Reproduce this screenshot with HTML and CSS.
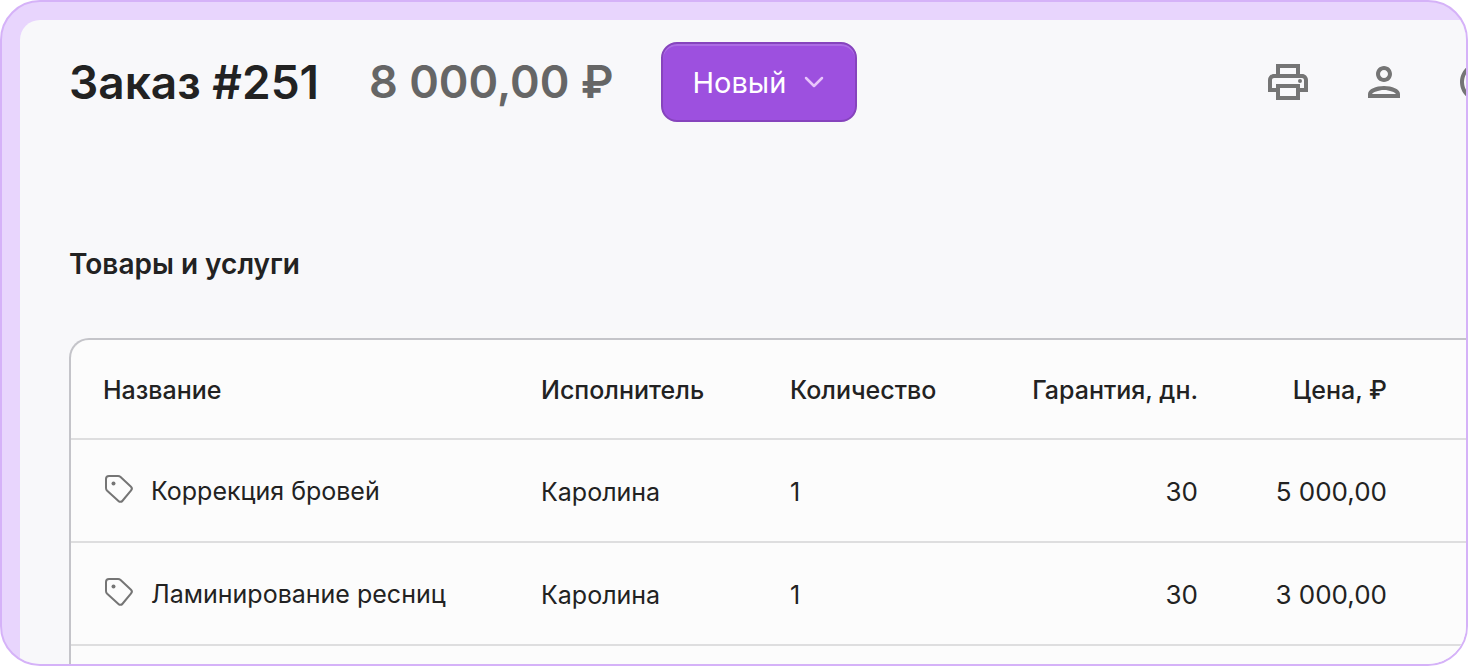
FILE: index.html
```html
<!DOCTYPE html>
<html lang="ru">
<head>
<meta charset="utf-8">
<meta name="viewport" content="width=device-width, initial-scale=1">
<title>Заказ #251</title>
<link rel="stylesheet" href="styles.css">
</head>
<body>
<div class="frame">
  <main class="page">
    <header class="order-header">
      <h1 class="order-title">Заказ #251</h1>
      <span class="order-total">8 000,00 ₽</span>
      <button class="status" type="button">
        Новый
        <svg class="status-arrow" viewBox="0 0 20 12" aria-hidden="true"><path d="M2 2l8 8 8-8"/></svg>
      </button>
      <div class="actions">
        <button class="action" type="button" aria-label="Печать">
          <svg viewBox="0 0 24 24"><path d="M19 8h-1V3H6v5H5c-1.66 0-3 1.34-3 3v6h4v4h12v-4h4v-6c0-1.66-1.34-3-3-3zM8 5h8v3H8V5zm8 12v2H8v-4h8v2zm2-2v-2H6v2H4v-4c0-.55.45-1 1-1h14c.55 0 1 .45 1 1v4h-2z"/><circle cx="18" cy="11.5" r="1"/></svg>
        </button>
        <button class="action" type="button" aria-label="Клиент">
          <svg viewBox="0 0 24 24"><path d="M12 6c1.1 0 2 .9 2 2s-.9 2-2 2-2-.9-2-2 .9-2 2-2m0 10c2.7 0 5.8 1.29 6 2H6c.23-.72 3.31-2 6-2m0-12C9.79 4 8 5.79 8 8s1.79 4 4 4 4-1.79 4-4-1.79-4-4-4zm0 10c-4 0-8 1.6-8 4v2h16v-2c0-2.400-4-4-8-4z"/></svg>
        </button>
        <button class="action" type="button" aria-label="История">
          <svg viewBox="0 0 24 24"><path d="M12 2C6.48 2 2 6.48 2 12s4.48 10 10 10 10-4.48 10-10S17.52 2 12 2zm0 18c-4.41 0-8-3.59-8-8s3.59-8 8-8 8 3.59 8 8-3.59 8-8 8z"/></svg>
        </button>
      </div>
    </header>

    <h2 class="section-title">Товары и услуги</h2>

    <div class="table-box">
      <table class="items">
        <colgroup>
          <col class="col-name"><col class="col-person"><col class="col-count"><col class="col-warranty"><col class="col-price"><col>
        </colgroup>
        <thead>
          <tr><th>Название</th><th>Исполнитель</th><th>Количество</th><th class="num">Гарантия, дн.</th><th class="num">Цена, ₽</th><td></td></tr>
        </thead>
        <tbody>
          <tr>
            <td><div class="item"><svg class="tag" viewBox="0 0 28 28" aria-hidden="true"><path d="M4 1h9a4 4 0 0 1 2.600 1L26 11.800a2.500 2.500 0 0 1 .1 3.500L17.300 26a2.500 2.500 0 0 1-3.600.2L2.200 15.800A4 4 0 0 1 1 13V4a3 3 0 0 1 3-3z"/><circle cx="8.500" cy="8.500" r="2"/></svg>Коррекция бровей</div></td>
            <td>Каролина</td><td>1</td><td class="num">30</td><td class="num">5 000,00</td><td></td>
          </tr>
          <tr>
            <td><div class="item"><svg class="tag" viewBox="0 0 28 28" aria-hidden="true"><path d="M4 1h9a4 4 0 0 1 2.600 1L26 11.800a2.500 2.500 0 0 1 .1 3.500L17.300 26a2.500 2.500 0 0 1-3.600.2L2.200 15.800A4 4 0 0 1 1 13V4a3 3 0 0 1 3-3z"/><circle cx="8.500" cy="8.500" r="2"/></svg>Ламинирование ресниц</div></td>
            <td>Каролина</td><td>1</td><td class="num">30</td><td class="num">3 000,00</td><td></td>
          </tr>
        </tbody>
      </table>
    </div>
  </main>
</div>
</body>
</html>
```
FILE: styles.css
```css
* {
  box-sizing: border-box;
}

body {
  margin: 0;
  background: #fff;
  color: #222;
  font-family: Inter, "Liberation Sans", sans-serif;
}

.frame {
  display: flex;
  height: 100vh;
  padding: 18px 0 0 18px;
  overflow: hidden;
  border: 2px solid #d5b2f8;
  border-radius: 40px;
  background: #e8d5fd;
}

.page {
  display: flex;
  flex: 1;
  flex-direction: column;
  min-width: 0;
  padding: 22px 0 0 49px;
  overflow: hidden;
  border-top-left-radius: 20px;
  background: #f8f8fa;
}

.order-header {
  display: flex;
  align-items: center;
  overflow: hidden;
}

.order-title,
.order-total {
  margin: 0;
  font-size: 46px;
  font-weight: 600;
  line-height: 60px;
  white-space: nowrap;
}

.order-total {
  margin-left: 50px;
  color: #666;
  font-size: 45px;
}

.status {
  display: flex;
  align-items: center;
  gap: 18px;
  height: 80px;
  margin-left: 47px;
  padding: 0 31px 0 30px;
  border: 2px solid #8644bd;
  border-radius: 16px;
  background: #9d50df;
  box-shadow: inset 0 2px 0 #ac6ce4;
  color: #fff;
  font-family: inherit;
  font-size: 29px;
  white-space: nowrap;
}

.status-arrow {
  width: 20px;
  height: 12px;
  fill: none;
  stroke: #e8c4fb;
  stroke-width: 2.5;
  stroke-linecap: round;
  stroke-linejoin: round;
}

.actions {
  display: flex;
  flex-shrink: 0;
  gap: 48px;
  margin-left: auto;
  margin-right: -38px;
}

.action {
  width: 48px;
  height: 48px;
  padding: 0;
  border: 0;
  background: none;
}

.action svg {
  display: block;
  fill: #757575;
}

.section-title {
  margin: 122px 0 54px;
  font-size: 28px;
  font-weight: 600;
  line-height: 40px;
}

.table-box {
  flex: 1;
  overflow: hidden;
  border: 2px solid #c4c4c9;
  border-width: 2px 0 0 2px;
  border-top-left-radius: 20px;
  background: #fcfcfc;
}

.items {
  width: 100%;
  border-collapse: separate;
  border-spacing: 0;
  table-layout: fixed;
  font-size: 25px;
  line-height: 32px;
}

.col-name {
  width: 438px;
}

.col-person {
  width: 249px;
}

.col-count {
  width: 222px;
}

.col-warranty {
  width: 250px;
}

.col-price {
  width: 189px;
}

.items th,
.items td {
  height: 103px;
  padding: 2px 32px 0;
  border-bottom: 2px solid #dededf;
  text-align: left;
  white-space: nowrap;
}

.items th,
.items thead td {
  height: 100px;
  font-weight: 500;
}

.items td:first-child {
  padding-top: 0;
}

.items td:last-child {
  padding: 0;
}

.items .num {
  text-align: right;
}

.items td.num {
  font-size: 26px;
}

.item {
  display: flex;
  align-items: center;
  gap: 18px;
}

.tag {
  width: 28px;
  height: 28px;
  margin: 0 0 4px 2px;
  overflow: visible;
  fill: none;
  stroke: #757575;
  stroke-width: 2;
}

.tag circle {
  fill: #757575;
  stroke: none;
}
```
